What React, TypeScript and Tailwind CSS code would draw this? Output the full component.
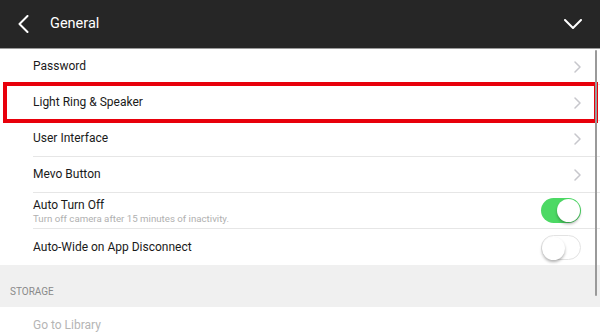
import React from 'react';

const font = { fontFamily: 'Roboto, "Liberation Sans", Arial, sans-serif' };

function Chevron() {
  return (
    <svg width="7" height="12" viewBox="0 0 7 12" fill="none" className="shrink-0">
      <path d="M1 1l5 5-5 5" stroke="#c7c7cc" strokeWidth="1.5" strokeLinecap="round" strokeLinejoin="round" />
    </svg>
  );
}

function Toggle({ on }: { on: boolean }) {
  return (
    <div
      className={`relative w-[40px] h-[25px] rounded-full shrink-0 ${
        on ? 'bg-[#4cd964]' : 'bg-white border border-[#e3e3e3]'
      }`}
    >
      <div
        className={`absolute top-[1px] w-[23px] h-[23px] rounded-full bg-white shadow-[0_2px_3px_rgba(0,0,0,0.3)] ${
          on ? 'right-[1px]' : 'left-0 top-0'
        }`}
      />
    </div>
  );
}

function Row({
  label,
  sub,
  right,
  last,
  highlight,
}: {
  label: string;
  sub?: string;
  right?: React.ReactNode;
  last?: boolean;
  highlight?: boolean;
}) {
  return (
    <div className={`relative h-[36px] pl-[33px] bg-white ${highlight ? 'z-10' : ''}`}>
      <div className={`h-full flex items-center pr-[19px] ${last ? '' : 'border-b border-[#e6e6e6]'}`}>
        <div className="flex-1 min-w-0">
          <div className="text-[12px] leading-[15px] text-[#1a1a1a]">{label}</div>
          {sub && <div className="text-[9.7px] leading-[11px] text-[#b0b0b0]">{sub}</div>}
        </div>
        {right}
      </div>
      {highlight && (
        <div className="absolute -top-[3px] -bottom-[2px] left-[3px] right-[2px] border-[4px] border-[#e8000b] pointer-events-none" />
      )}
    </div>
  );
}

export default function App() {
  return (
    <div className="relative w-[600px] h-[335px] overflow-hidden bg-white" style={font}>
      <div className="h-[49px] bg-[#262626] border-b border-[#9a9a9a] flex items-center pl-[18px] pr-[18px]">
        <svg width="11" height="18" viewBox="0 0 11 18" fill="none">
          <path d="M9.5 1L1.5 9l8 8" stroke="white" strokeWidth="2" strokeLinecap="round" strokeLinejoin="round" />
        </svg>
        <div className="ml-[21px] flex-1 text-white text-[14.5px]">General</div>
        <svg width="18" height="10" viewBox="0 0 18 10" fill="none">
          <path d="M1 1l8 8 8-8" stroke="white" strokeWidth="2" strokeLinecap="round" strokeLinejoin="round" />
        </svg>
      </div>

      <Row label="Password" right={<Chevron />} />
      <Row label="Light Ring & Speaker" right={<Chevron />} highlight />
      <Row label="User Interface" right={<Chevron />} />
      <Row label="Mevo Button" right={<Chevron />} />
      <Row
        label="Auto Turn Off"
        sub="Turn off camera after 15 minutes of inactivity."
        right={<Toggle on />}
      />
      <Row label="Auto-Wide on App Disconnect" right={<Toggle on={false} />} last />

      <div className="h-[42px] bg-[#f0f0f0] flex items-end pl-[10px] pb-[8px]">
        <span className="text-[10px] text-[#8a8a8a]">STORAGE</span>
      </div>

      <div className="h-[36px] pl-[33px] flex items-center">
        <span className="text-[12px] text-[#b5b5b5]">Go to Library</span>
      </div>

      <div className="absolute z-20 left-[595px] top-[50px] w-[2px] h-[246px] rounded-full bg-[#9a9a9a]" />
    </div>
  );
}
